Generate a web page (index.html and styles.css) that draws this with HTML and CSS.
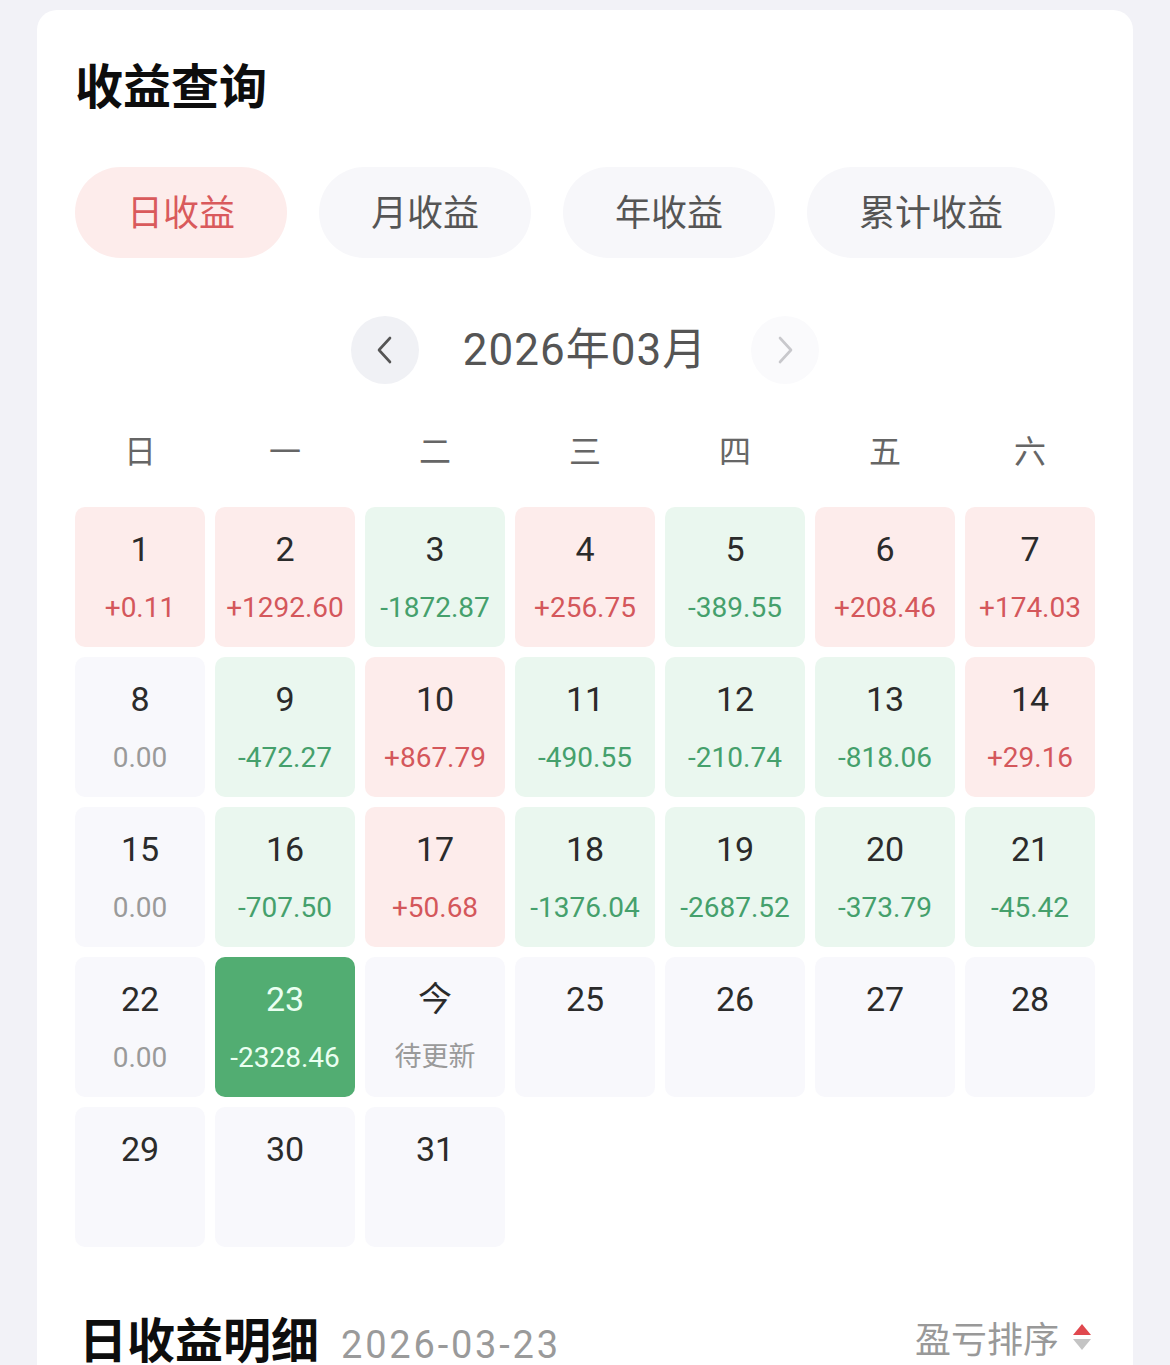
FILE: index.html
```html
<!DOCTYPE html>
<html lang="zh-CN">
<head>
<meta charset="utf-8">
<title>收益查询</title>
<link rel="stylesheet" href="styles.css">
</head>
<body>
<main class="card">
  <h1 class="title">收益查询</h1>

  <nav class="tabs">
    <button class="tab tab-active">日收益</button>
    <button class="tab">月收益</button>
    <button class="tab">年收益</button>
    <button class="tab">累计收益</button>
  </nav>

  <div class="month-nav">
    <button class="nav-btn nav-prev" aria-label="上个月">
      <svg width="20" height="30" viewBox="0 0 20 30"><path d="M15 3 L4 15 L15 27" fill="none" stroke="#555" stroke-width="2.6" stroke-linecap="round" stroke-linejoin="round"/></svg>
    </button>
    <span class="month-label">2026年03月</span>
    <button class="nav-btn nav-next" aria-label="下个月">
      <svg width="20" height="30" viewBox="0 0 20 30"><path d="M5 3 L16 15 L5 27" fill="none" stroke="#c8c8cc" stroke-width="2.6" stroke-linecap="round" stroke-linejoin="round"/></svg>
    </button>
  </div>

  <div class="weekdays">
    <span>日</span><span>一</span><span>二</span><span>三</span><span>四</span><span>五</span><span>六</span>
  </div>

  <div class="calendar">
    <div class="day up"><span class="num">1</span><span class="val">+0.11</span></div>
    <div class="day up"><span class="num">2</span><span class="val">+1292.60</span></div>
    <div class="day down"><span class="num">3</span><span class="val">-1872.87</span></div>
    <div class="day up"><span class="num">4</span><span class="val">+256.75</span></div>
    <div class="day down"><span class="num">5</span><span class="val">-389.55</span></div>
    <div class="day up"><span class="num">6</span><span class="val">+208.46</span></div>
    <div class="day up"><span class="num">7</span><span class="val">+174.03</span></div>

    <div class="day flat"><span class="num">8</span><span class="val">0.00</span></div>
    <div class="day down"><span class="num">9</span><span class="val">-472.27</span></div>
    <div class="day up"><span class="num">10</span><span class="val">+867.79</span></div>
    <div class="day down"><span class="num">11</span><span class="val">-490.55</span></div>
    <div class="day down"><span class="num">12</span><span class="val">-210.74</span></div>
    <div class="day down"><span class="num">13</span><span class="val">-818.06</span></div>
    <div class="day up"><span class="num">14</span><span class="val">+29.16</span></div>

    <div class="day flat"><span class="num">15</span><span class="val">0.00</span></div>
    <div class="day down"><span class="num">16</span><span class="val">-707.50</span></div>
    <div class="day up"><span class="num">17</span><span class="val">+50.68</span></div>
    <div class="day down"><span class="num">18</span><span class="val">-1376.04</span></div>
    <div class="day down"><span class="num">19</span><span class="val">-2687.52</span></div>
    <div class="day down"><span class="num">20</span><span class="val">-373.79</span></div>
    <div class="day down"><span class="num">21</span><span class="val">-45.42</span></div>

    <div class="day flat"><span class="num">22</span><span class="val">0.00</span></div>
    <div class="day down selected"><span class="num">23</span><span class="val">-2328.46</span></div>
    <div class="day empty"><span class="num">今</span><span class="val pending">待更新</span></div>
    <div class="day empty"><span class="num">25</span></div>
    <div class="day empty"><span class="num">26</span></div>
    <div class="day empty"><span class="num">27</span></div>
    <div class="day empty"><span class="num">28</span></div>

    <div class="day empty"><span class="num">29</span></div>
    <div class="day empty"><span class="num">30</span></div>
    <div class="day empty"><span class="num">31</span></div>
  </div>

  <div class="detail-head">
    <div class="detail-title">
      <h2>日收益明细</h2>
      <span class="detail-date">2026-03-23</span>
    </div>
    <button class="sort">
      <span>盈亏排序</span>
      <span class="sort-arrows"><i class="arrow-up"></i><i class="arrow-down"></i></span>
    </button>
  </div>
</main>
</body>
</html>
```

FILE: styles.css
```css
* {
  box-sizing: border-box;
}

html, body {
  margin: 0;
  height: 100%;
  overflow: hidden;
}

body {
  background: #f2f2f7;
  padding: 10px 37px 0;
  font-family: "Noto Sans CJK SC", "Noto Sans", sans-serif;
  color: #333;
}

button {
  font-family: inherit;
  border: none;
  cursor: pointer;
}

.card {
  background: #fff;
  border-radius: 20px;
  padding: 43px 38px 0;
  min-height: 1400px;
}

.title {
  margin: 0;
  font-size: 48px;
  font-weight: 700;
  line-height: 60px;
  color: #0d0d0d;
}

/* period tabs */
.tabs {
  display: flex;
  gap: 32px;
  margin-top: 54px;
}

.tab {
  height: 91px;
  padding: 0 52px 6px;
  border-radius: 46px;
  background: #f7f7fa;
  color: #555;
  font-size: 36px;
  line-height: 50px;
}

.tab-active {
  background: #fdeceb;
  color: #d95a5c;
}

/* month switcher */
.month-nav {
  display: flex;
  align-items: center;
  justify-content: center;
  gap: 44px;
  margin-top: 58px;
  height: 68px;
}

.nav-btn {
  width: 68px;
  height: 68px;
  border-radius: 50%;
  display: flex;
  align-items: center;
  justify-content: center;
  padding: 0;
}

.nav-prev {
  background: #f0f1f5;
}

.nav-next {
  background: #fafafc;
}

.month-label {
  font-family: Roboto, "Noto Sans CJK SC", sans-serif;
  font-size: 44px;
  line-height: 60px;
  color: #555;
  letter-spacing: 1px;
}

/* weekday header */
.weekdays {
  display: grid;
  grid-template-columns: 130px repeat(5, 140px) 130px;
  column-gap: 10px;
  margin-top: 43px;
  height: 50px;
  line-height: 44px;
  text-align: center;
  font-size: 32px;
  color: #666;
}

/* month grid */
.calendar {
  display: grid;
  grid-template-columns: 130px repeat(5, 140px) 130px;
  grid-auto-rows: 140px;
  gap: 10px;
  margin-top: 30px;
}

.day {
  display: flex;
  flex-direction: column;
  align-items: center;
  padding-top: 20px;
  border-radius: 10px;
  background: #f8f8fc;
}

.num {
  font-family: Roboto, "Noto Sans CJK SC", sans-serif;
  font-size: 34px;
  line-height: 44px;
  color: #2b2b2b;
}

.val {
  margin-top: 17px;
  font-family: Roboto, "Noto Sans CJK SC", sans-serif;
  font-size: 28px;
  line-height: 40px;
  white-space: nowrap;
}

.up {
  background: #fdeceb;
}

.up .val {
  color: #d4575b;
}

.down {
  background: #eaf7ef;
}

.down .val {
  color: #45a06c;
}

.flat {
  background: #f8f8fc;
}

.flat .val {
  color: #9a9a9a;
}

.selected {
  background: #52ad72;
}

.selected .num,
.selected .val {
  color: #eafff1;
}

.pending {
  margin-top: 14px;
  font-family: "Noto Sans CJK SC", sans-serif;
  font-size: 27px;
  color: #9a9a9a;
}

/* detail header */
.detail-head {
  display: flex;
  align-items: center;
  justify-content: space-between;
  margin-top: 60px;
  height: 60px;
}

.detail-title {
  display: flex;
  align-items: baseline;
  gap: 22px;
  padding-left: 4px;
}

.detail-title h2 {
  margin: 0;
  font-size: 48px;
  font-weight: 700;
  line-height: 60px;
  color: #0d0d0d;
}

.detail-date {
  font-family: Roboto, "Noto Sans CJK SC", sans-serif;
  font-size: 38px;
  color: #9a9a9a;
  letter-spacing: 2.8px;
}

.sort {
  display: flex;
  align-items: center;
  gap: 14px;
  background: none;
  padding: 0;
  margin-right: 4px;
  font-size: 36px;
  color: #999;
}

.sort-arrows {
  display: flex;
  flex-direction: column;
  gap: 4px;
}

.arrow-up,
.arrow-down {
  display: block;
  width: 0;
  height: 0;
  border-left: 9px solid transparent;
  border-right: 9px solid transparent;
}

.arrow-up {
  border-bottom: 11px solid #e0484e;
}

.arrow-down {
  border-top: 11px solid #c4c4c4;
}
```
